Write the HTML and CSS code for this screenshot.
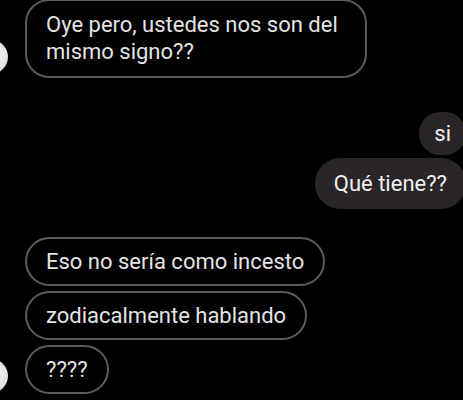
FILE: index.html
```html
<!DOCTYPE html>
<html lang="es">
<head>
<meta charset="UTF-8">
<meta name="viewport" content="width=device-width, initial-scale=1.0">
<title>Chat</title>
<link rel="stylesheet" href="styles.css">
</head>
<body>

<div class="thread">
  <div class="group incoming first">
    <div class="avatar"></div>
    <div class="stack">
      <p class="bubble wide">Oye pero, ustedes nos son del mismo signo??</p>
    </div>
  </div>

  <div class="group outgoing">
    <div class="stack">
      <p class="bubble mine small">si</p>
      <p class="bubble mine">Qué tiene??</p>
    </div>
  </div>

  <div class="group incoming last">
    <div class="avatar"></div>
    <div class="stack">
      <p class="bubble">Eso no sería como incesto</p>
      <p class="bubble">zodiacalmente hablando</p>
      <p class="bubble">????</p>
    </div>
  </div>
</div>

</body>
</html>
```

FILE: styles.css
```css
html, body {
  margin: 0;
  padding: 0;
  background-color: #000;
}

body {
  width: 463px;
  height: 400px;
  overflow: hidden;
  font-family: Roboto, "Liberation Sans", sans-serif;
  color: #e4e4e4;
}

.thread {
  display: flex;
  flex-direction: column;
  padding-left: 25px;
}

.group {
  display: flex;
  align-items: flex-end;
}

.stack {
  display: flex;
  flex-direction: column;
  gap: 5px;
}

.avatar {
  flex: none;
  width: 34px;
  height: 34px;
  margin-left: -51px;
  margin-right: 17px;
  margin-bottom: 4px;
  border-radius: 50%;
  background: radial-gradient(circle at 65% 45%, #f6f6f6 0%, #dcdcdc 55%, #9a9a9a 100%);
}

.bubble {
  margin: 0;
  padding: 9px 19px;
  border: 2px solid #5c5c5c;
  border-radius: 25px;
  font-size: 22px;
  line-height: 27px;
  align-self: flex-start;
}

.wide {
  width: 302px;
  padding-top: 10px;
  padding-right: 17px;
  padding-bottom: 11px;
  border-radius: 24px;
}

.first {
  margin-top: -1px;
}

.outgoing {
  justify-content: flex-end;
  margin-top: 34px;
  margin-right: -3px;
}

.outgoing .stack {
  align-items: flex-end;
  gap: 3px;
}

.mine {
  align-self: flex-end;
  border: none;
  background-color: #2a2528;
  padding: 12px 19px;
  color: #f0f0f0;
}

.small {
  padding: 8px 15px;
  border-radius: 21px;
}

.last {
  margin-top: 28px;
}

.last .avatar {
  margin-bottom: 1px;
}
```
